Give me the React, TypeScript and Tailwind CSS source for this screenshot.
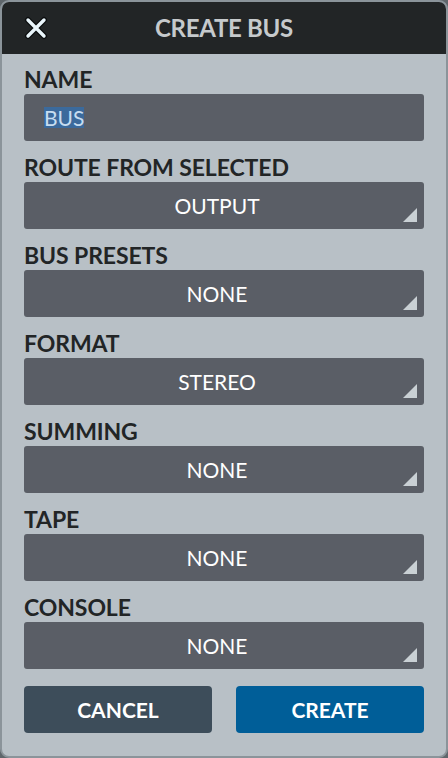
import React from 'react';

const font = { fontFamily: 'Lato, "Open Sans", sans-serif' };

const fields = [
  { label: 'ROUTE FROM SELECTED', value: 'OUTPUT' },
  { label: 'BUS PRESETS', value: 'NONE' },
  { label: 'FORMAT', value: 'STEREO' },
  { label: 'SUMMING', value: 'NONE' },
  { label: 'TAPE', value: 'NONE' },
  { label: 'CONSOLE', value: 'NONE' },
];

function CloseIcon() {
  return (
    <svg width="24" height="24" viewBox="0 0 24 24">
      <path d="M4 4 L20 20 M20 4 L4 20" stroke="#0b0d0e" strokeWidth="6" strokeLinecap="round" />
      <path d="M4 4 L20 20 M20 4 L4 20" stroke="#eaf6fb" strokeWidth="3.4" strokeLinecap="round" />
    </svg>
  );
}

function Corner() {
  return (
    <svg className="absolute right-[7px] bottom-[7px]" width="14" height="14" viewBox="0 0 14 14">
      <polygon points="14,0 14,14 0,14" fill="#c9d0d4" />
    </svg>
  );
}

function Label({ children }: { children: React.ReactNode }) {
  return (
    <div className="h-[26px] text-[23px] leading-[26px] font-bold text-[#222526] tracking-[-0.1px]">
      {children}
    </div>
  );
}

export default function App() {
  return (
    <div className="w-[448px] h-[758px] bg-[#5f666b]" style={font}>
      <div className="w-full h-full rounded-[9px] border-2 border-[#8b949a] bg-[#b8c0c6] overflow-hidden flex flex-col">
        {/* Header */}
        <div className="h-[52px] bg-[#222526] relative flex items-center justify-center shrink-0">
          <div className="absolute left-[22px] top-[14px]">
            <CloseIcon />
          </div>
          <span className="text-[24px] font-bold text-[#c6cacc] tracking-[-0.3px]">CREATE BUS</span>
        </div>

        <div className="flex-1 px-[22px] pt-[12px] flex flex-col">
          <div className="flex flex-col gap-[13px]">
            <div>
              <Label>NAME</Label>
              <div className="mt-[2px] h-[47px] rounded-[3px] bg-[#5a5e66] flex items-center pl-[20px]">
                <span className="bg-[#3b6a9c] text-[#c7ddf0] text-[21px] leading-[21px]">BUS</span>
              </div>
            </div>
            {fields.map((f) => (
              <div key={f.label}>
                <Label>{f.label}</Label>
                <div className="mt-[2px] h-[47px] rounded-[3px] bg-[#5a5e66] relative flex items-center justify-center pr-[14px]">
                  <span className="text-[21px] text-white">{f.value}</span>
                  <Corner />
                </div>
              </div>
            ))}
          </div>

          <div className="mt-[17px] flex gap-[24px]">
            <button className="flex-1 h-[47px] rounded-[4px] bg-[#3d4d5a] text-white text-[21px] font-bold">
              CANCEL
            </button>
            <button className="flex-1 h-[47px] rounded-[4px] bg-[#005e98] text-white text-[21px] font-bold">
              CREATE
            </button>
          </div>
        </div>
      </div>
    </div>
  );
}
